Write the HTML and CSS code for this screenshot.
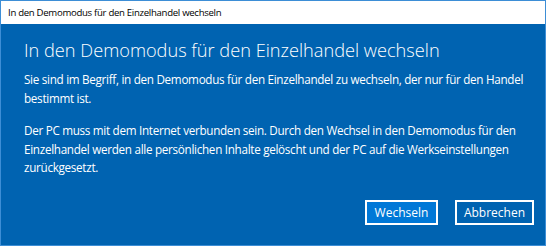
FILE: index.html
```html
<!DOCTYPE html>
<html lang="de">
<head>
  <meta charset="UTF-8" />
  <title>In den Demomodus für den Einzelhandel wechseln</title>
  <link rel="stylesheet" href="styles.css">
</head>
<body>
  <div class="dialog-window">
    <div class="title-bar">In den Demomodus für den Einzelhandel wechseln</div>
    <div class="dialog-body">
      <h1>In den Demomodus für den Einzelhandel wechseln</h1>
      <p>Sie sind im Begriff, in den Demomodus für den Einzelhandel zu wechseln, der nur für den Handel bestimmt ist.</p>
      <p>Der PC muss mit dem Internet verbunden sein. Durch den Wechsel in den Demomodus für den Einzelhandel werden alle persönlichen Inhalte gelöscht und der PC auf die Werkseinstellungen zurückgesetzt.</p>
      <div class="action-buttons">
        <button class="primary">Wechseln</button>
        <button>Abbrechen</button>
      </div>
    </div>
  </div>
</body>
</html>
```

FILE: styles.css
```css
* {
  box-sizing: border-box;
}

html, body {
  margin: 0;
  padding: 0;
  width: 546px;
  height: 246px;
  overflow: hidden;
  font-family: 'Open Sans', 'Noto Sans', sans-serif;
}

.dialog-window {
  width: 546px;
  height: 246px;
  border: 1px solid #3d8ed6;
  display: flex;
  flex-direction: column;
  background: #0063b1;
}

.title-bar {
  height: 23px;
  background: #fff;
  color: #000;
  font-size: 9.6px;
  letter-spacing: -0.3px;
  line-height: 23px;
  padding-left: 7px;
}

.dialog-body {
  flex: 1;
  display: flex;
  flex-direction: column;
  padding: 13px 8px 0 23px;
  color: #fff;
}

h1 {
  font-weight: 300;
  font-size: 18.2px;
  line-height: 26px;
  margin: 0 0 7px;
}

p {
  font-size: 11.7px;
  letter-spacing: -0.3px;
  line-height: 18.5px;
  margin: 0 0 14px;
}

.action-buttons {
  display: flex;
  justify-content: flex-end;
  gap: 17px;
  margin-top: auto;
  margin-right: 3px;
  margin-bottom: 20px;
}

button {
  height: 25px;
  border: 2px solid #fff;
  background: transparent;
  color: #fff;
  font-family: inherit;
  font-size: 12px;
  padding: 0;
  width: 79px;
}

button.primary {
  width: 73px;
  background: #0078d7;
}
```
